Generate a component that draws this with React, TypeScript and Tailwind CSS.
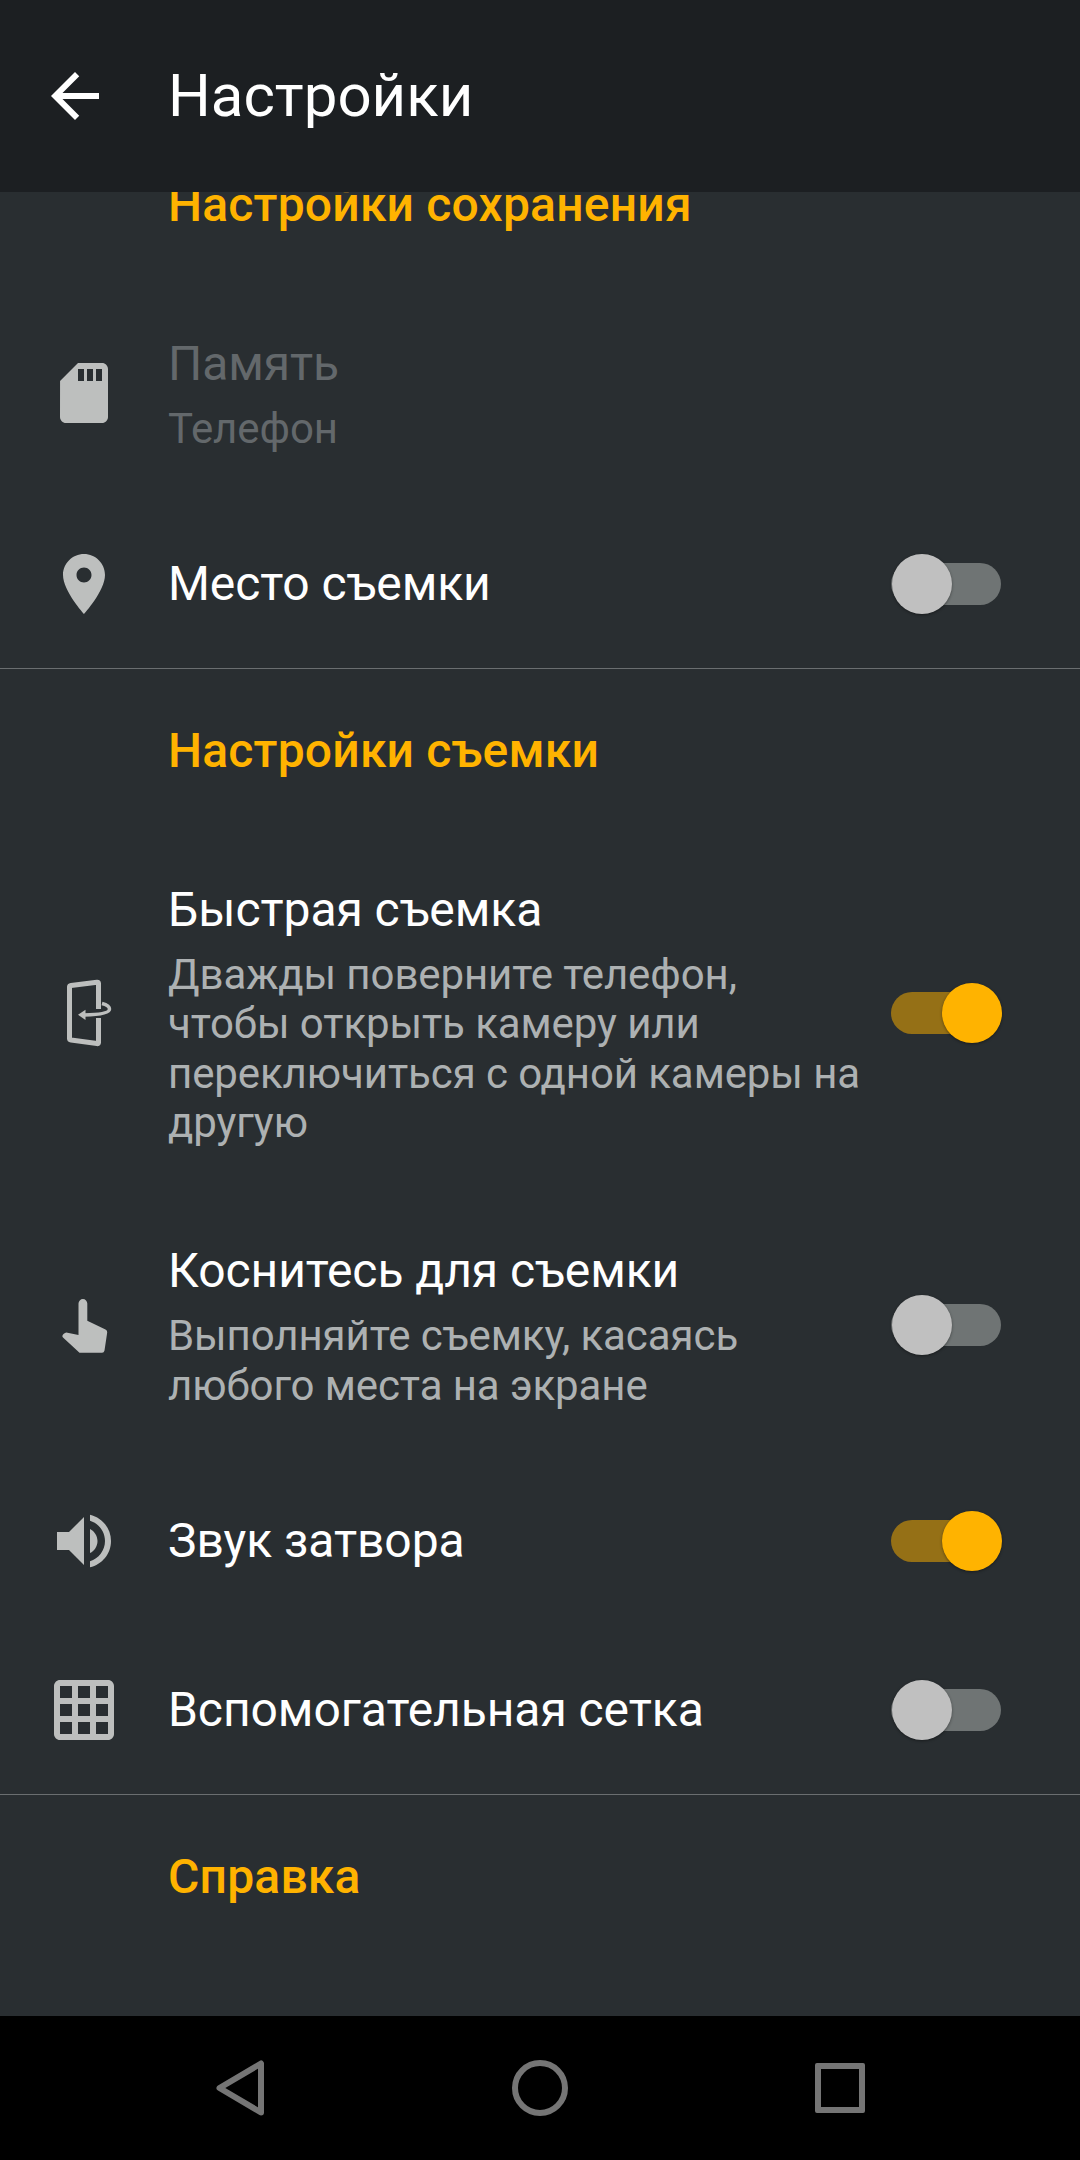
import type { ReactNode } from 'react';

const FONT = "font-['Roboto',sans-serif]";

const Icon = ({ children }: { children: ReactNode }) => (
  <svg viewBox="0 0 24 24" className="w-[72px] h-[72px] shrink-0 fill-[#bdbfbe]">
    {children}
  </svg>
);

const SdIcon = () => (
  <Icon>
    <path d="M18 2h-8L4.02 8 4 20c0 1.1.9 2 2 2h12c1.1 0 2-.9 2-2V4c0-1.1-.9-2-2-2zm-6 6h-2V4h2v4zm3 0h-2V4h2v4zm3 0h-2V4h2v4z" />
  </Icon>
);

const PinIcon = () => (
  <Icon>
    <path d="M12 2C8.13 2 5 5.13 5 9c0 5.25 7 13 7 13s7-7.75 7-13c0-3.87-3.13-7-7-7zm0 9.5c-1.38 0-2.5-1.12-2.5-2.5s1.12-2.5 2.5-2.5 2.5 1.12 2.5 2.5-1.12 2.5-2.5 2.5z" />
  </Icon>
);

const FlipIcon = () => (
  <svg viewBox="0 0 72 72" className="w-[72px] h-[72px] shrink-0">
    <path
      d="M50.5 32V6.5Q50.5 5 49 5.2L23 8.5Q21.5 8.7 21.5 10V61.5Q21.5 62.8 23 63L49 66.6Q50.5 66.8 50.5 65.5V41"
      fill="none"
      stroke="#bdbfbe"
      strokeWidth="5"
    />
    <path
      d="M54 26.5Q61.5 28.5 61.5 32Q61.5 37.5 36 38"
      fill="none"
      stroke="#bdbfbe"
      strokeWidth="3.5"
    />
    <path d="M30 37.8 37.5 32.8V43Z" fill="#bdbfbe" />
  </svg>
);

const TouchIcon = () => (
  <svg viewBox="0 0 72 72" className="w-[72px] h-[72px] shrink-0">
    <path
      d="M30.5 14.5a4.4 4.4 0 0 1 8.8 0V31.7L57.5 40.5Q59.5 41.5 59.2 43.5L56.5 61.5Q56 63.7 54 63.7H31.5L15 48.5Q13.5 47 15.5 45L17 44Q18 43.3 19.5 43.7L30.5 46Z"
      fill="#bdbfbe"
    />
  </svg>
);

const SoundIcon = () => (
  <Icon>
    <path d="M3 9v6h4l5 5V4L7 9H3zm13.5 3c0-1.77-1.02-3.29-2.5-4.03v8.05c1.48-.73 2.5-2.25 2.5-4.02zM14 3.23v2.06c2.89.86 5 3.54 5 6.71s-2.11 5.85-5 6.71v2.06c4.01-.91 7-4.49 7-8.77s-2.99-7.86-7-8.77z" />
  </Icon>
);

const GridIcon = () => (
  <Icon>
    <path d="M20 2H4c-1.1 0-2 .9-2 2v16c0 1.1.9 2 2 2h16c1.1 0 2-.9 2-2V4c0-1.1-.9-2-2-2zM8 20H4v-4h4v4zm0-6H4v-4h4v4zm0-6H4V4h4v4zm6 12h-4v-4h4v4zm0-6h-4v-4h4v4zm0-6h-4V4h4v4zm6 12h-4v-4h4v4zm0-6h-4v-4h4v4zm0-6h-4V4h4v4z" />
  </Icon>
);

const Switch = ({ on }: { on: boolean }) => (
  <div
    className={`w-[110px] h-[42px] shrink-0 rounded-full flex items-center ${
      on ? 'bg-[#957016] justify-end' : 'bg-[#6f7474] justify-start'
    }`}
  >
    <div
      className={`w-[60px] h-[60px] shrink-0 rounded-full shadow-[0_1px_3px_rgba(0,0,0,0.4)] ${
        on ? 'bg-[#ffb300] -mr-px' : 'bg-[#c0c0c0] ml-px'
      }`}
    />
  </div>
);

const SectionHeader = ({ title }: { title: string }) => (
  <div className="h-[163px] pl-[168px] flex items-center">
    <h2 className="text-[48px] leading-[56px] font-medium tracking-[0.2px] text-[#ffb300]">{title}</h2>
  </div>
);

interface RowProps {
  icon: ReactNode;
  title: string;
  summary?: string;
  height: string;
  disabled?: boolean;
  checked?: boolean;
}

const Row = ({ icon, title, summary, height, disabled, checked }: RowProps) => (
  <div className={`flex items-center pl-12 pr-[79px] ${height}`}>
    {icon}
    <div className={`flex-1 ml-[48px] ${summary ? 'pt-[3px]' : ''}`}>
      <p className={`text-[48px] leading-[56px] tracking-[-0.06px] ${disabled ? 'text-[#63686b]' : 'text-white'}`}>
        {title}
      </p>
      {summary && (
        <p
          className={`mt-[12px] text-[42px] leading-[49.5px] tracking-[-0.09px] whitespace-pre-line ${
            disabled ? 'text-[#63686b]' : 'text-[#adb1b2]'
          }`}
        >
          {summary}
        </p>
      )}
    </div>
    {checked !== undefined && <Switch on={checked} />}
  </div>
);

const Divider = () => <div className="h-px bg-[#6a6e70]" />;

export default function App() {
  return (
    <div className={`w-[1080px] h-[2160px] flex flex-col bg-[#292e31] ${FONT}`}>
      {/* App bar */}
      <header className="h-[192px] shrink-0 flex items-center pl-[39px] bg-[#1c1f22]">
        <svg viewBox="0 0 24 24" className="w-[72px] h-[72px] fill-white">
          <path d="M20 11H7.83l5.59-5.59L12 4l-8 8 8 8 1.41-1.41L7.83 13H20v-2z" />
        </svg>
        <h1 className="ml-[57px] text-[60px] leading-[70px] text-white">Настройки</h1>
      </header>

      {/* Scrolled list */}
      <main className="flex-1 overflow-hidden">
        <div className="-mt-[69px]">
          <SectionHeader title="Настройки сохранения" />
          <Row icon={<SdIcon />} title="Память" summary="Телефон" height="h-[214px]" disabled />
          <Row icon={<PinIcon />} title="Место съемки" height="h-[168px]" checked={false} />
          <Divider />
          <SectionHeader title="Настройки съемки" />
          <Row
            icon={<FlipIcon />}
            title="Быстрая съемка"
            summary={'Дважды поверните телефон,\nчтобы открыть камеру или\nпереключиться с одной камеры на\nдругую'}
            height="h-[362px]"
            checked
          />
          <Row
            icon={<TouchIcon />}
            title="Коснитесь для съемки"
            summary={'Выполняйте съемку, касаясь\nлюбого места на экране'}
            height="h-[262px]"
            checked={false}
          />
          <Row icon={<SoundIcon />} title="Звук затвора" height="h-[170px]" checked />
          <Row icon={<GridIcon />} title="Вспомогательная сетка" height="h-[168px]" checked={false} />
          <Divider />
          <SectionHeader title="Справка" />
        </div>
      </main>

      {/* Navigation bar */}
      <nav className="h-[144px] shrink-0 flex items-center justify-center bg-black">
        <div className="w-[300px] flex justify-center">
          <svg viewBox="0 0 48 56" className="w-12 h-14 fill-none stroke-[#757575]">
            <path d="M3.5 28 45 3.5V52.5Z" strokeWidth="6" strokeLinejoin="round" />
          </svg>
        </div>
        <div className="w-[300px] flex justify-center">
          <div className="w-14 h-14 rounded-full border-[6px] border-[#757575]" />
        </div>
        <div className="w-[300px] flex justify-center">
          <div className="w-[50px] h-[50px] rounded-[2px] border-[6px] border-[#757575]" />
        </div>
      </nav>
    </div>
  );
}
